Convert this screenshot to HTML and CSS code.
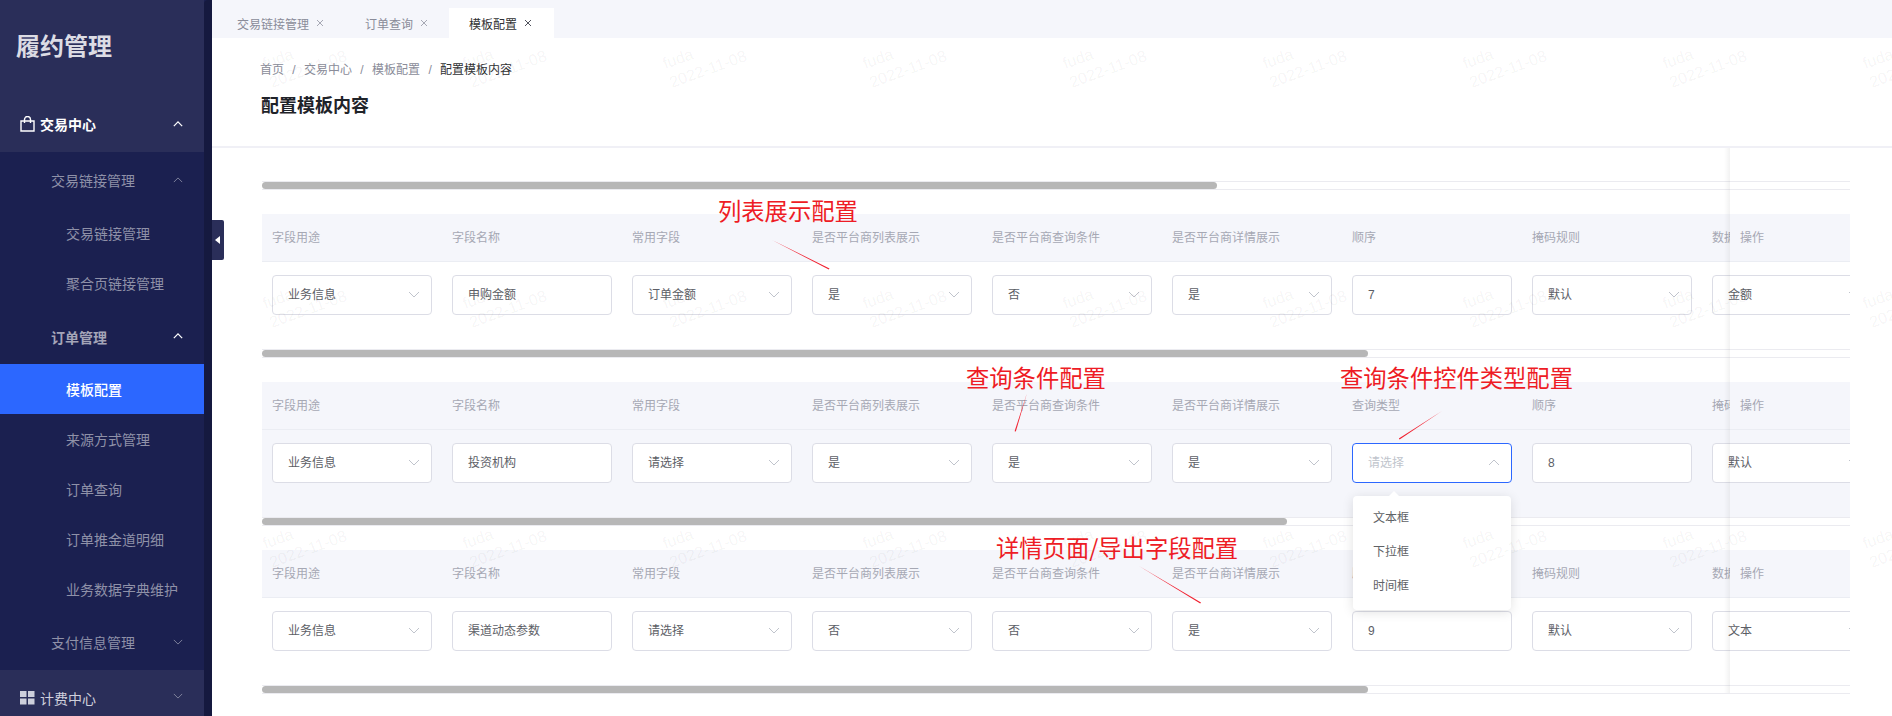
FILE: index.html
```html
<!DOCTYPE html>
<html lang="zh-CN">
  <head>
    <meta charset="utf-8" />
    <title>配置模板内容</title>
    <link rel="stylesheet" href="styles.css">
  </head>
  <body>
    <svg class="defs" width="0" height="0">
      <symbol id="down" viewBox="0 0 12 7"><path d="M1 1l5 5 5-5" fill="none" stroke="currentColor"/></symbol>
      <symbol id="up" viewBox="0 0 12 7"><path d="M1 6l5-5 5 5" fill="none" stroke="currentColor"/></symbol>
      <symbol id="close" viewBox="0 0 8 8"><path d="M1 1l6 6M7 1L1 7" fill="none" stroke="currentColor"/></symbol>
    </svg>

    <aside class="sidebar">
      <nav class="menu">
        <div class="logo">履约管理</div>
        <div class="section-head">
          <svg class="section-icon" viewBox="0 0 15 16"><path d="M1 5h13v10H1zM4.5 7V3.5a3 3 0 0 1 6 0V7" fill="none" stroke="#fff" stroke-width="1.4"/></svg>
          <span class="section-name">交易中心</span>
          <svg class="chev chev-strong"><use href="#up"/></svg>
        </div>
        <div class="submenu">
          <div class="group-head"><span>交易链接管理</span><svg class="chev"><use href="#up"/></svg></div>
          <div class="item">交易链接管理</div>
          <div class="item">聚合页链接管理</div>
          <div class="group-head group-open"><span>订单管理</span><svg class="chev chev-strong"><use href="#up"/></svg></div>
          <div class="item active">模板配置</div>
          <div class="item">来源方式管理</div>
          <div class="item">订单查询</div>
          <div class="item">订单推金道明细</div>
          <div class="item">业务数据字典维护</div>
          <div class="group-head"><span>支付信息管理</span><svg class="chev"><use href="#down"/></svg></div>
        </div>
        <div class="section-head section-closed">
          <svg class="section-icon" viewBox="0 0 15 14"><path d="M0 0h6.5v6H0zM8 0h6.5v6H8zM0 7.5h6.5v6H0zM8 7.5h6.5v6H8z" fill="#cdcfdc"/></svg>
          <span>计费中心</span>
          <svg class="chev"><use href="#down"/></svg>
        </div>
      </nav>
      <div class="menu-track"></div>
      <div class="collapse-btn"><i></i></div>
    </aside>

    <main class="main">
      <div class="tabs">
        <div class="tab">交易链接管理<svg class="tab-x"><use href="#close"/></svg></div>
        <div class="tab">订单查询<svg class="tab-x"><use href="#close"/></svg></div>
        <div class="tab tab-on">模板配置<svg class="tab-x"><use href="#close"/></svg></div>
      </div>

      <header class="page-head">
        <div class="crumbs">
          <span>首页</span><em>/</em><span>交易中心</span><em>/</em><span>模板配置</span><em>/</em><b>配置模板内容</b>
        </div>
        <h1>配置模板内容</h1>
      </header>

      <section class="content">
        <div class="scroller first"><div class="thumb thumb-a"></div></div>

        <div class="tbl">
          <div class="tbl-head">
            <span>字段用途</span><span>字段名称</span><span>常用字段</span><span>是否平台商列表展示</span><span>是否平台商查询条件</span><span>是否平台商详情展示</span><span>顺序</span><span>掩码规则</span><span>数据类型</span>
            <div class="fixed-head">操作</div>
          </div>
          <div class="tbl-row">
            <div class="cell"><div class="field">业务信息<svg class="arrow"><use href="#down"/></svg></div></div>
            <div class="cell"><div class="field">申购金额</div></div>
            <div class="cell"><div class="field">订单金额<svg class="arrow"><use href="#down"/></svg></div></div>
            <div class="cell"><div class="field">是<svg class="arrow"><use href="#down"/></svg></div></div>
            <div class="cell"><div class="field">否<svg class="arrow"><use href="#down"/></svg></div></div>
            <div class="cell"><div class="field">是<svg class="arrow"><use href="#down"/></svg></div></div>
            <div class="cell"><div class="field">7</div></div>
            <div class="cell"><div class="field">默认<svg class="arrow"><use href="#down"/></svg></div></div>
            <div class="cell"><div class="field">金额<svg class="arrow"><use href="#down"/></svg></div></div>
          </div>
        </div>
        <div class="scroller"><div class="thumb thumb-b"></div></div>

        <div class="tbl">
          <div class="tbl-head">
            <span>字段用途</span><span>字段名称</span><span>常用字段</span><span>是否平台商列表展示</span><span>是否平台商查询条件</span><span>是否平台商详情展示</span><span>查询类型</span><span>顺序</span><span>掩码规则</span>
            <div class="fixed-head">操作</div>
          </div>
          <div class="tbl-row row-hover">
            <div class="cell"><div class="field">业务信息<svg class="arrow"><use href="#down"/></svg></div></div>
            <div class="cell"><div class="field">投资机构</div></div>
            <div class="cell"><div class="field">请选择<svg class="arrow"><use href="#down"/></svg></div></div>
            <div class="cell"><div class="field">是<svg class="arrow"><use href="#down"/></svg></div></div>
            <div class="cell"><div class="field">是<svg class="arrow"><use href="#down"/></svg></div></div>
            <div class="cell"><div class="field">是<svg class="arrow"><use href="#down"/></svg></div></div>
            <div class="cell"><div class="field field-focus">请选择<svg class="arrow"><use href="#up"/></svg></div></div>
            <div class="cell"><div class="field">8</div></div>
            <div class="cell"><div class="field">默认<svg class="arrow"><use href="#down"/></svg></div></div>
          </div>
        </div>
        <div class="scroller"><div class="thumb thumb-c"></div></div>

        <div class="tbl">
          <div class="tbl-head">
            <span>字段用途</span><span>字段名称</span><span>常用字段</span><span>是否平台商列表展示</span><span>是否平台商查询条件</span><span>是否平台商详情展示</span><span>顺序</span><span>掩码规则</span><span>数据类型</span>
            <div class="fixed-head">操作</div>
          </div>
          <div class="tbl-row">
            <div class="cell"><div class="field">业务信息<svg class="arrow"><use href="#down"/></svg></div></div>
            <div class="cell"><div class="field">渠道动态参数</div></div>
            <div class="cell"><div class="field">请选择<svg class="arrow"><use href="#down"/></svg></div></div>
            <div class="cell"><div class="field">否<svg class="arrow"><use href="#down"/></svg></div></div>
            <div class="cell"><div class="field">否<svg class="arrow"><use href="#down"/></svg></div></div>
            <div class="cell"><div class="field">是<svg class="arrow"><use href="#down"/></svg></div></div>
            <div class="cell"><div class="field">9</div></div>
            <div class="cell"><div class="field">默认<svg class="arrow"><use href="#down"/></svg></div></div>
            <div class="cell"><div class="field">文本<svg class="arrow"><use href="#down"/></svg></div></div>
          </div>
        </div>
        <div class="scroller"><div class="thumb thumb-b"></div></div>

        <div class="fixed-shadow"></div>

        <!-- open select -->
        <div class="dropdown">
          <div class="dropdown-item">文本框</div>
          <div class="dropdown-item">下拉框</div>
          <div class="dropdown-item">时间框</div>
        </div>
      </section>

      <!-- red notes drawn on top of the screenshot -->
      <div class="note note-list">列表展示配置</div>
      <div class="note note-query">查询条件配置</div>
      <div class="note note-type">查询条件控件类型配置</div>
      <div class="note note-detail">详情页面/导出字段配置</div>
      <svg class="note-lines" viewBox="212 0 1680 716">
        <polygon points="772,240 829.5,268.4 828.8,269.6"/>
        <polygon points="1027,393 1015.8,431.6 1014.6,431.3"/>
        <polygon points="1442,411 1399.6,439.4 1398.8,438.4"/>
        <polygon points="1139,566 1201,602.4 1200.2,603.6"/>
      </svg>

      <div class="watermarks">
        <span>fuda<br>2022-11-08</span><span>fuda<br>2022-11-08</span><span>fuda<br>2022-11-08</span><span>fuda<br>2022-11-08</span><span>fuda<br>2022-11-08</span><span>fuda<br>2022-11-08</span><span>fuda<br>2022-11-08</span><span>fuda<br>2022-11-08</span><span>fuda<br>2022-11-08</span>
        <span>fuda<br>2022-11-08</span><span>fuda<br>2022-11-08</span><span>fuda<br>2022-11-08</span><span>fuda<br>2022-11-08</span><span>fuda<br>2022-11-08</span><span>fuda<br>2022-11-08</span><span>fuda<br>2022-11-08</span><span>fuda<br>2022-11-08</span><span>fuda<br>2022-11-08</span>
        <span>fuda<br>2022-11-08</span><span>fuda<br>2022-11-08</span><span>fuda<br>2022-11-08</span><span>fuda<br>2022-11-08</span><span>fuda<br>2022-11-08</span><span>fuda<br>2022-11-08</span><span>fuda<br>2022-11-08</span><span>fuda<br>2022-11-08</span><span>fuda<br>2022-11-08</span>
      </div>
    </main>
  </body>
</html>
```
FILE: styles.css
```css
html,
body {
  height: 100%;
  margin: 0;
  overflow: hidden;
  background-color: #fff;
}

body {
  display: flex;
  font-family: "Liberation Sans", "Noto Sans CJK SC", sans-serif;
  font-size: 12px;
}

.defs {
  position: absolute;
}

/* sidebar */
.sidebar {
  position: relative;
  z-index: 2;
  flex: 0 0 212px;
  display: flex;
  height: 716px;
  background-color: #1b2050;
}

.menu {
  width: 204px;
  flex: none;
  overflow: hidden;
}

.menu-track {
  width: 8px;
  flex: none;
  background-color: #15193f;
  border-radius: 4px 0 0 0;
}

.logo {
  height: 98px;
  padding: 32px 0 0 16px;
  box-sizing: border-box;
  background-color: #2a2e59;
  color: #dcdce4;
  font-size: 24px;
  font-weight: 700;
  line-height: 30px;
}

.section-head {
  position: relative;
  display: flex;
  align-items: center;
  height: 54px;
  padding: 0 0 2px 20px;
  box-sizing: border-box;
  background-color: #2a2e59;
  color: #cfd0dc;
  font-size: 14px;
}

.section-name {
  color: #fff;
  font-weight: 700;
}

.section-closed {
  padding: 2px 0 0 20px;
}

.section-icon {
  width: 15px;
  height: 16px;
  margin-right: 5px;
}

.section-closed .section-icon {
  height: 14px;
}

.chev {
  position: absolute;
  right: 21px;
  top: 50%;
  width: 10px;
  height: 6px;
  margin-top: -4px;
  color: #8f91a8;
}

.chev-strong {
  color: #fff;
  stroke-width: 1.5;
}

.submenu {
  padding: 4px 0 2px;
}

.group-head {
  position: relative;
  display: flex;
  align-items: center;
  height: 50px;
  padding: 0 0 2px 51px;
  box-sizing: border-box;
  color: #8f91a8;
  font-size: 14px;
}

.group-head.group-open {
  margin-top: 4px;
  padding-bottom: 0;
  color: #a4a5b8;
  font-weight: 700;
}

.item {
  display: flex;
  align-items: center;
  height: 50px;
  padding-left: 66px;
  color: #8f91a8;
  font-size: 14px;
}

.group-head + .item {
  margin-top: 2px;
}

.item + .group-head {
  margin-top: 4px;
}

.item.active {
  background-color: #2c67ff;
  color: #fff;
  font-weight: 500;
}

.collapse-btn {
  position: absolute;
  left: 212px;
  top: 220px;
  display: flex;
  align-items: center;
  width: 12px;
  height: 40px;
  background-color: #2a2e59;
  border-radius: 0 2px 2px 0;
}

.collapse-btn i {
  margin-left: 3px;
  border: 4px solid transparent;
  border-left-width: 0;
  border-right: 5px solid #fff;
}

/* right side */
.main {
  position: relative;
  flex: 1;
  min-width: 0;
  height: 716px;
  overflow: hidden;
}

.tabs {
  display: flex;
  align-items: flex-end;
  height: 38px;
  padding-left: 5px;
  background-color: #f5f6fb;
}

.tab {
  display: flex;
  align-items: center;
  height: 30px;
  padding: 0 21px 0 20px;
  color: #8a8c99;
}

.tab-on {
  padding-right: 22px;
  background-color: #fff;
  color: #303133;
}

.tab-x {
  width: 8px;
  height: 8px;
  margin-left: 7px;
  color: #a6a8b4;
}

.tab-on .tab-x {
  color: #50525c;
}

.page-head {
  height: 110px;
  padding: 23px 0 0 48px;
  box-sizing: border-box;
  border-bottom: 2px solid #f0f0f6;
}

.crumbs {
  display: flex;
  color: #8a8c99;
  line-height: 18px;
}

.crumbs em {
  width: 20px;
  text-align: center;
  font-style: normal;
}

.crumbs b {
  color: #303133;
  font-weight: 400;
}

h1 {
  margin: 14px 0 0 1px;
  color: #1f2329;
  font-size: 18px;
  font-weight: 700;
  line-height: 26px;
}

.content {
  position: relative;
  width: 1588px;
  margin-left: 50px;
  padding-top: 33px;
}

.scroller {
  height: 9px;
  box-sizing: border-box;
  border-top: 1px solid #ebebf0;
  border-bottom: 1px solid #ebebf0;
  margin-bottom: 24px;
}

.thumb {
  height: 7px;
  background-color: #b7b7b7;
  border-radius: 4px;
}

.thumb-a {
  width: 955px;
}

.thumb-b {
  width: 1106px;
}

.thumb-c {
  width: 1025px;
}

.tbl {
  position: relative;
  overflow: hidden;
}

.tbl-head {
  display: flex;
  height: 48px;
  padding-bottom: 3px;
  box-sizing: border-box;
  align-items: center;
  background-color: #f5f6fb;
  border-bottom: 1px solid #ebedf3;
  color: #a6a8b4;
  white-space: nowrap;
}

.tbl-head span {
  flex: 0 0 170px;
  padding-left: 10px;
}

.fixed-head {
  position: absolute;
  right: 0;
  top: 0;
  display: flex;
  align-items: center;
  width: 120px;
  height: 47px;
  padding: 0 0 3px 10px;
  box-sizing: border-box;
  background-color: #f5f6fb;
}

.tbl-row {
  display: flex;
  height: 87px;
  box-sizing: border-box;
  padding-top: 13px;
}

.row-hover {
  background-color: #f5f6fb;
}

.cell {
  flex: 0 0 180px;
  padding-left: 10px;
  box-sizing: border-box;
}

.field {
  position: relative;
  width: 160px;
  height: 40px;
  padding-left: 15px;
  box-sizing: border-box;
  background-color: #fff;
  border: 1px solid #dcdde6;
  border-radius: 4px;
  color: #5c5e66;
  line-height: 38px;
}

.field-focus {
  border-color: #2c67ff;
  color: #c0c4cc;
}

.arrow {
  position: absolute;
  right: 11px;
  top: 15px;
  width: 12px;
  height: 7px;
  color: #c0c4cc;
}

.fixed-shadow {
  position: absolute;
  top: 0;
  left: 1462px;
  width: 6px;
  height: 545px;
  background: linear-gradient(to right, rgba(0, 0, 0, 0), rgba(0, 0, 0, 0.05));
}

.dropdown {
  position: absolute;
  left: 1091px;
  top: 348px;
  width: 158px;
  padding: 5px 0 7px;
  background-color: #fff;
  border-radius: 4px;
  box-shadow: 0 2px 12px rgba(0, 0, 0, 0.12);
}

.dropdown::before {
  content: "";
  position: absolute;
  left: 36px;
  top: -5px;
  border: 5px solid transparent;
  border-top-width: 0;
  border-bottom-color: #fff;
}

.dropdown-item {
  height: 34px;
  padding-left: 20px;
  color: #606266;
  line-height: 34px;
}

/* notes */
.note {
  position: absolute;
  color: #ee1c25;
  font-family: "Noto Sans CJK SC", sans-serif;
  font-size: 23.3px;
  font-weight: 400;
  line-height: 30px;
  white-space: nowrap;
}

.note-list {
  left: 506px;
  top: 195px;
}

.note-query {
  left: 754px;
  top: 362px;
}

.note-type {
  left: 1128px;
  top: 362px;
}

.note-detail {
  left: 784px;
  top: 532px;
}

.note-lines {
  position: absolute;
  left: 0;
  top: 0;
  width: 1680px;
  height: 716px;
  fill: #f1202f;
}

.watermarks {
  position: absolute;
  left: 48px;
  top: 0;
  display: grid;
  grid-template-columns: repeat(9, 200px);
  grid-auto-rows: 240px;
  pointer-events: none;
}

.watermarks span {
  margin-top: 55px;
  color: rgba(0, 0, 0, 0.05);
  font-size: 16px;
  line-height: 20px;
  white-space: nowrap;
  justify-self: start;
  align-self: start;
  transform: rotate(-20deg);
  transform-origin: left top;
}
```
